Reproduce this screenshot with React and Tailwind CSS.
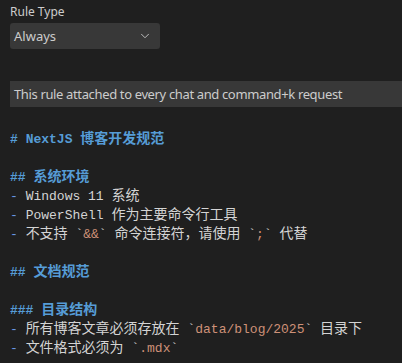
import { ChevronDown } from 'lucide-react'

// CJK runs render a touch larger than the mono Latin, as in the editor
const J = ({ children }) => <span className="text-[14px]">{children}</span>

const Code = ({ children }) => (
  <>
    <span className="text-[#d4d4d4]">`</span>
    <span className="text-[#ce9178]">{children}</span>
    <span className="text-[#d4d4d4]">`</span>
  </>
)

const Heading = ({ marks, children }) => (
  <div className="font-bold text-[#569cd6]">
    {marks} {children}
  </div>
)

const Item = ({ children }) => (
  <div className="text-[#d4d4d4]">
    <span className="text-[#6796e6]">-</span> {children}
  </div>
)

const Blank = () => <div className="h-[19px]" />

export default function App() {
  return (
    <div className="min-h-[363px] w-[402px] overflow-hidden bg-[#1f1f1f] font-['Noto_Sans','Noto_Sans_CJK_SC',sans-serif]">
      <div className="px-[10px] pt-[3px]">
        <div className="text-[12px] leading-[18px] text-[#cccccc]">Rule Type</div>
        <div className="mt-[2px] flex h-[26px] w-[150px] items-center justify-between rounded-[3px] bg-[#383838] pl-[4px] pr-[8px]">
          <span className="pt-[2px] text-[13px] text-[#cccccc]">Always</span>
          <ChevronDown size={14} strokeWidth={1.5} className="text-[#cccccc]" />
        </div>

        <div className="mt-[32px] -mr-[20px] flex h-[26px] items-center bg-[#383838] pl-[4px]">
          <span className="whitespace-nowrap pt-[1px] text-[13px] tracking-[-0.36px] text-[#cccccc]">
            This rule attached to every chat and command+k request
          </span>
        </div>

        <div className="mt-[23px] whitespace-pre font-['Liberation_Mono','Noto_Sans_CJK_SC',monospace] text-[13px] leading-[19px]">
          <Heading marks="#">
            NextJS <J>博客开发规范</J>
          </Heading>
          <Blank />
          <Heading marks="##">
            <J>系统环境</J>
          </Heading>
          <Item>
            Windows 11 <J>系统</J>
          </Item>
          <Item>
            PowerShell <J>作为主要命令行工具</J>
          </Item>
          <Item>
            <J>不支持</J> <Code>&&</Code> <J>命令连接符，请使用</J> <Code>;</Code> <J>代替</J>
          </Item>
          <Blank />
          <Heading marks="##">
            <J>文档规范</J>
          </Heading>
          <Blank />
          <Heading marks="###">
            <J>目录结构</J>
          </Heading>
          <Item>
            <J>所有博客文章必须存放在</J> <Code>data/blog/2025</Code> <J>目录下</J>
          </Item>
          <Item>
            <J>文件格式必须为</J> <Code>.mdx</Code>
          </Item>
        </div>
      </div>
    </div>
  )
}
